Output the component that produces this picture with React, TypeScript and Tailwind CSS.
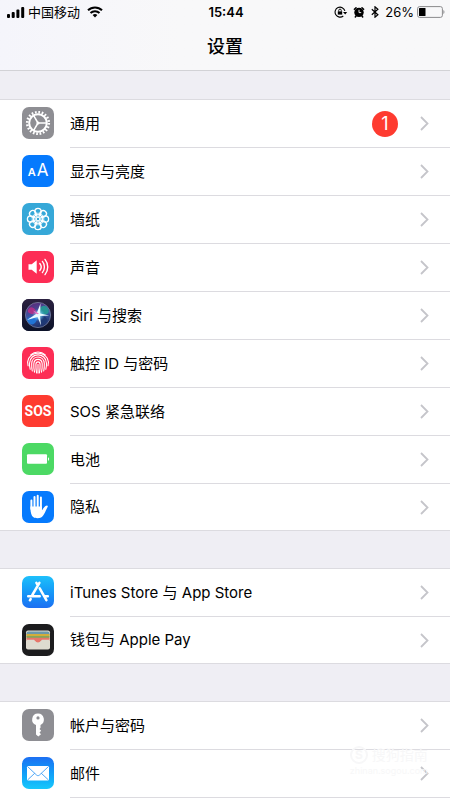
import type { ReactNode } from 'react'

interface Row {
  label: string
  icon: ReactNode
  tile: string
  badge?: number
}

const GearIcon = () => (
  <svg viewBox="0 0 32 32" className="size-8" fill="none" stroke="#fff" aria-hidden="true">
    <circle cx="16" cy="16" r="10.8" strokeWidth="2.6" strokeDasharray="1.7 1.693" />
    <circle cx="16" cy="16" r="8.8" strokeWidth="2" />
    <path d="M16 16h8M16 16l-4.300-7.400M16 16l-4.300 7.400" strokeWidth="1.5" />
    <circle cx="16" cy="16" r="1.6" fill="#fff" stroke="none" />
  </svg>
)

const petals = [0, 45, 90, 135, 180, 225, 270, 315]

const FlowerIcon = () => (
  <svg viewBox="0 0 32 32" className="size-8" fill="none" stroke="#fff" strokeWidth="1.3" aria-hidden="true">
    {petals.map((angle) => (
      <g key={angle} transform={`rotate(${angle} 16 16)`}>
        <circle cx="16" cy="8.600" r="3.2" />
        <circle cx="16" cy="11.800" r="1.7" strokeWidth="0.7" />
      </g>
    ))}
    <circle cx="16" cy="16" r="1.8" strokeWidth="1.1" />
  </svg>
)

const SpeakerIcon = () => (
  <svg viewBox="0 0 32 32" className="size-8" fill="none" stroke="#fff" strokeWidth="1.4" strokeLinecap="round" aria-hidden="true">
    <path d="M6.5 13.2h3.2l5-3.9v13.4l-5-3.900H6.5z" fill="#fff" stroke="none" />
    <path d="M17.8 12.500a5.500 5.500 0 0 1 0 7M20.400 10.400a8.800 8.800 0 0 1 0 11.200M23 8.400a12 12 0 0 1 0 15.200" />
  </svg>
)

const SiriIcon = () => (
  <svg viewBox="0 0 32 32" className="size-8" aria-hidden="true">
    <defs>
      <linearGradient id="siri-bg" x1="0" y1="0" x2="0" y2="1">
        <stop offset="0" stopColor="#2b2140" />
        <stop offset="1" stopColor="#0b1128" />
      </linearGradient>
      <linearGradient id="siri-orb" x1="0.3" y1="0" x2="0.6" y2="1">
        <stop offset="0" stopColor="#5a2a78" />
        <stop offset="0.5" stopColor="#3b59a8" />
        <stop offset="1" stopColor="#1c2f66" />
      </linearGradient>
      <radialGradient id="siri-glow">
        <stop offset="0" stopColor="#fff" />
        <stop offset="0.3" stopColor="#9fe9ff" stopOpacity="0.8" />
        <stop offset="1" stopColor="#4a9be8" stopOpacity="0" />
      </radialGradient>
    </defs>
    <rect width="32" height="32" fill="url(#siri-bg)" />
    <circle cx="16" cy="16" r="12.6" fill="url(#siri-orb)" stroke="#8189a8" strokeWidth="0.7" />
    <path d="M17 15c0-6 3-10 7.500-7.500C29 12 27 18 17 15z" fill="#22a093" opacity="0.85" />
    <path d="M16 17c-6 0-11 1-11 4 2 6 9 7 11-4z" fill="#1f7be0" opacity="0.85" />
    <path d="M16 17c6-1 10 2 9 5-3 4-7 4-9-5z" fill="#1d3975" />
    <path d="M16 15C13 8 8 6 6 11c-1 3 3 5 10 4z" fill="#c22d86" opacity="0.8" />
    <circle cx="16.500" cy="16" r="6.500" fill="url(#siri-glow)" />
    <path d="M5 21 14.500 14.800 18.500 4.500l-.3 9.900 9 2-9.200.6 1 9.500-3.400-8.600z" fill="#e9fbff" />
    <path d="m15 15.200-4.500-4 6.500 3.200z" fill="#f06fc6" />
  </svg>
)

const FingerprintIcon = () => (
  <svg viewBox="0 0 32 32" className="size-8" fill="none" stroke="#fff" strokeWidth="1.1" strokeLinecap="round" aria-hidden="true">
    <path d="M8.700 7.800a11 11 0 0 1 14.600 0" />
    <path d="M6.100 18.800c-.9-3-.6-5.300.6-7.600 4.300-6.700 14.300-6.700 18.600 0 1.300 2.300 1.500 4.700.7 7.600" />
    <path d="M8.200 22.300c-.6-2-.8-4-.7-6C8 5.100 24 5.100 24.500 16.300c.1 2-.1 4-.7 6" />
    <path d="M10.300 24c-.6-2.600-.7-5-.6-7.500.5-8.700 12.100-8.700 12.600 0 .1 2.500 0 4.900-.6 7.500" />
    <path d="M12.500 25.200c-.7-3-.8-5.700-.7-8.400.4-5.900 8-5.900 8.400 0 .1 2.700 0 5.400-.7 8.400" />
    <path d="M14.600 26c-.6-3-.8-6-.7-8.900.2-3 4-3 4.200 0 .1 2.900-.1 5.900-.7 8.900" />
    <path d="M16 17.500V26" />
  </svg>
)

const BatteryTileIcon = () => (
  <svg viewBox="0 0 32 32" className="size-8" fill="#fff" aria-hidden="true">
    <rect x="5" y="11.300" width="20" height="9.400" rx="1" />
    <path d="M26 14.200c1.500.4 1.500 3.200 0 3.600z" />
  </svg>
)

const HandIcon = () => (
  <svg viewBox="0 0 32 32" className="size-8" fill="none" stroke="#fff" strokeLinecap="round" aria-hidden="true">
    <path d="M9.400 9.500V18M12.500 6v11M15.700 4.800V17M18.900 6.500V18" strokeWidth="2" />
    <path d="M8.400 15.500h11.500v3.700c1.600-1.500 2.700-4.400 5-4.600.9 0 1.200.6.700 1.400-1.900 3.200-3.200 8.500-6.500 10.400-1.900 1.100-5.700 1.100-7.600-.1-2.400-1.600-3.100-5.300-3.100-10.800z" fill="#fff" stroke="none" />
  </svg>
)

const AppStoreIcon = () => (
  <svg viewBox="0 0 32 32" className="size-8" fill="none" stroke="#fff" strokeWidth="2.500" strokeLinecap="round" aria-hidden="true">
    <path d="M17.400 6.800 10.300 19M14.400 6.800 16 9.500M17.700 12.300l6.700 11.900M6.200 20.300h11.500M22.300 20.300h3.500M8.700 23l-.8 1.300" />
  </svg>
)

const WalletIcon = () => (
  <svg viewBox="0 0 32 32" className="size-8" aria-hidden="true">
    <rect x="4" y="6.500" width="24" height="19" rx="2" fill="#e2ded3" />
    <path d="M4.500 9.500a2 2 0 0 1 2-2h19a2 2 0 0 1 2 2v2h-23z" fill="#6b98aa" />
    <path d="M4.500 10h23v3h-23z" fill="#d2ad3a" />
    <path d="M4.500 12h23v2.500h-23z" fill="#85a65a" />
    <path d="M4.500 13.800h23V17h-23z" fill="#e7766a" />
    <path d="M4.500 15.800h7.200c1.400 0 1.500 2.600 4.300 2.600s2.900-2.600 4.300-2.600h7.200V23a2 2 0 0 1-2 2h-19a2 2 0 0 1-2-2z" fill="#dedbd0" />
    <path d="M11.700 15.500h8.600c-1.400 0-1.500 2.900-4.300 2.900s-2.900-2.900-4.300-2.900z" fill="#e7766a" />
  </svg>
)

const KeyIcon = () => (
  <svg viewBox="0 0 32 32" className="size-8" aria-hidden="true">
    <path fillRule="evenodd" fill="#fff" d="M16 4.500a6 6 0 0 0-2 11.600v9.400l2.300 2 2.700-2.300-1.500-1.700 1.700-1.700-1.700-1.800 1-1.200v-2.900A6 6 0 0 0 16 4.500zm0 2.800a1.600 1.600 0 1 1 0 3.200 1.600 1.600 0 0 1 0-3.200z" />
  </svg>
)

const MailIcon = () => (
  <svg viewBox="0 0 32 32" className="size-8" aria-hidden="true">
    <rect x="5" y="9" width="22" height="14.500" rx="1.200" fill="#fff" />
    <path d="m5.500 9.500 9 8.500c1 .9 2 .9 3 0l9-8.500M5.500 23l7.300-6.800M26.500 23l-7.300-6.800" fill="none" stroke="#3b9df5" strokeWidth="0.900" />
  </svg>
)

const sections: Row[][] = [
  [
    { label: '通用', icon: <GearIcon />, tile: 'bg-[#8e8e93]', badge: 1 },
    {
      label: '显示与亮度',
      icon: (
        <span className="flex items-baseline gap-px text-white" aria-hidden="true">
          <span className="text-[11px] font-semibold">A</span>
          <span className="text-[17px]">A</span>
        </span>
      ),
      tile: 'bg-[#067afd]',
    },
    { label: '墙纸', icon: <FlowerIcon />, tile: 'bg-[#36a8d8]' },
    { label: '声音', icon: <SpeakerIcon />, tile: 'bg-[#fd2d55]' },
    { label: 'Siri 与搜索', icon: <SiriIcon />, tile: 'bg-[#1b1a33]' },
    { label: '触控 ID 与密码', icon: <FingerprintIcon />, tile: 'bg-[#fd2d55]' },
    {
      label: 'SOS 紧急联络',
      icon: (
        <span className="font-['Roboto'] text-[14px] font-bold text-white" aria-hidden="true">
          SOS
        </span>
      ),
      tile: 'bg-[#fe3b30]',
    },
    { label: '电池', icon: <BatteryTileIcon />, tile: 'bg-[#4cd964]' },
    { label: '隐私', icon: <HandIcon />, tile: 'bg-[#067afd]' },
  ],
  [
    { label: 'iTunes Store 与 App Store', icon: <AppStoreIcon />, tile: 'bg-linear-to-b from-[#1fc0fb] to-[#1d6ff2]' },
    { label: '钱包与 Apple Pay', icon: <WalletIcon />, tile: 'bg-[#1c1c1e]' },
  ],
  [
    { label: '帐户与密码', icon: <KeyIcon />, tile: 'bg-[#8e8e93]' },
    { label: '邮件', icon: <MailIcon />, tile: 'bg-linear-to-b from-[#1d6ff2] to-[#19c8fb]' },
  ],
]

function StatusBar() {
  return (
    <div className="grid h-6 grid-cols-[1fr_auto_1fr] items-center pr-[5px] pl-[7px] text-[13px] leading-6">
      <div className="flex items-center">
        <svg viewBox="0 0 18 11" className="h-[11px] w-[18px]" aria-label="信号">
          <rect y="7" width="3" height="4" rx="1" />
          <rect x="4.700" y="5" width="3" height="6" rx="1" />
          <rect x="9.400" y="2.500" width="3" height="8.500" rx="1" />
          <rect x="14.200" width="3" height="11" rx="1" />
        </svg>
        <span className="ml-[3px]">中国移动</span>
        <svg viewBox="0 0 16 12" className="ml-[7px] h-3 w-4" fill="none" stroke="#000" strokeWidth="2" aria-label="Wi-Fi">
          <path d="M1 4.300a10 10 0 0 1 14 0M3.500 7a6.400 6.400 0 0 1 9 0" />
          <path d="M5.600 9.100a3.400 3.400 0 0 1 4.800 0L8 11.600z" fill="#000" stroke="none" />
        </svg>
      </div>
      <span className="font-semibold">15:44</span>
      <div className="flex items-center justify-end">
        <svg viewBox="0 0 14 12" className="h-3 w-3.5" fill="none" stroke="#000" aria-label="方向锁定">
          <path d="M10.900 4.800A5 5 0 1 0 9.300 10" strokeWidth="1.100" />
          <path d="m9 6 2.200 2.600L13.200 6z" fill="#000" stroke="none" />
          <rect x="3.800" y="5.400" width="4.400" height="3.200" fill="#000" stroke="none" />
          <path d="M4.700 5.600V4.400a1.300 1.300 0 0 1 2.600 0v1.200" strokeWidth="0.900" />
        </svg>
        <svg viewBox="0 0 12 12" className="ml-[5px] size-3" aria-label="闹钟">
          <circle cx="6" cy="6.400" r="4.700" />
          <path d="M1.400 3.200 3 1.700M10.600 3.200 9 1.700M3 10l-.7 1M9 10l.7 1" stroke="#000" strokeWidth="1.500" strokeLinecap="round" />
          <path d="M6 3.800v2.800h2.200" fill="none" stroke="#fff" strokeWidth="0.900" />
        </svg>
        <svg viewBox="0 0 8 12" className="ml-1.5 h-3 w-2" fill="none" stroke="#000" strokeWidth="1.200" aria-label="蓝牙">
          <path d="m.8 3.300 6.100 5.400L4 11.200V.8l2.900 2.500L.8 8.700" />
        </svg>
        <span className="ml-1.5">26%</span>
        <svg viewBox="0 0 28 12" className="ml-[3px] h-3 w-7" aria-label="电量">
          <rect x="0.600" y="0.600" width="24.800" height="10.800" rx="2" fill="none" stroke="#8a8a8c" />
          <rect x="2" y="2" width="6.500" height="8" rx="0.500" />
          <path d="M26.400 4c1.400.6 1.400 3.400 0 4z" fill="#8a8a8c" />
        </svg>
      </div>
    </div>
  )
}

function SettingsRow({ label, icon, tile, badge, closing }: Row & { closing: boolean }) {
  return (
    <li>
      <button type="button" className="flex w-full items-start pl-[22px] text-left">
        <span className={`mt-[7px] flex size-8 items-center justify-center overflow-hidden rounded-[7px] ${tile}`}>
          {icon}
        </span>
        <span
          className={`ml-4 flex flex-1 items-center pr-[21px] ${closing ? 'h-[46px]' : 'h-12 border-b border-[#dcdbe0]'}`}
        >
          <span className="flex-1 pt-px">{label}</span>
          {badge && (
            <span className="mr-[22px] flex size-[26px] items-center justify-center rounded-full bg-[#fe3b30] text-[18px] text-white">
              {badge}
            </span>
          )}
          <svg viewBox="0 0 9 15" className="h-[15px] w-[9px]" fill="none" stroke="#c5c5ca" strokeWidth="1.800" aria-hidden="true">
            <path d="m1 1 6.500 6.500L1 14" />
          </svg>
        </span>
      </button>
    </li>
  )
}

function Watermark() {
  return (
    <div className="pointer-events-none absolute right-[22px] bottom-[23px] text-[#f7f7f8]" aria-hidden="true">
      <div className="flex items-center gap-1">
        <span className="flex size-[18px] items-center justify-center rounded-full border-2 text-[12px] font-bold">S</span>
        <span className="text-[14px] leading-5">搜狗指南</span>
      </div>
      <div className="text-center text-[9px] leading-3">zhinan.sogou.com</div>
    </div>
  )
}

export default function App() {
  return (
    <div className="relative min-h-screen overflow-hidden bg-[#efeef4] font-['Inter','Noto_Sans_CJK_SC',sans-serif] text-[15px] text-black">
      <header className="border-b border-[#d2d2d6] bg-linear-to-r from-[#f5f5fb] to-[#f8f8f9] to-40%">
        <StatusBar />
        <h1 className="h-[46px] text-center text-[18px] leading-[46px] font-medium">设置</h1>
      </header>
      <main className="flex flex-col gap-[37px] pt-7">
        {sections.map((rows, i) => {
          const closed = i < sections.length - 1
          return (
            <ul key={rows[0].label} className={`border-t border-[#dcdbe0] bg-white ${closed ? 'border-b' : 'pb-[2px]'}`}>
              {rows.map((row, j) => (
                <SettingsRow key={row.label} {...row} closing={closed && j === rows.length - 1} />
              ))}
            </ul>
          )
        })}
      </main>
      <Watermark />
    </div>
  )
}
